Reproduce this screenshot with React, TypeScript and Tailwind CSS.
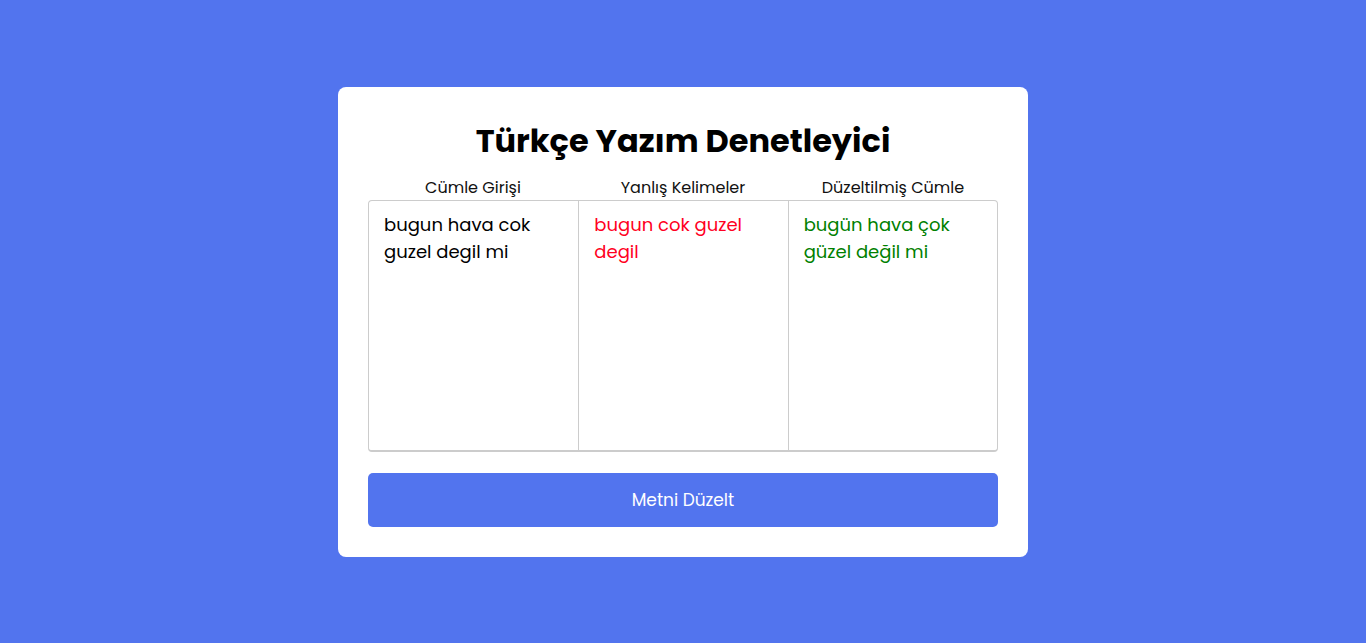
export default function App() {
  const font = { fontFamily: '"Poppins", "Lato", "Noto Sans", sans-serif' };
  return (
    <div
      className="min-h-screen w-full bg-[#5274ee] flex items-center justify-center"
      style={font}
    >
      <div className="w-[690px] bg-white rounded-lg p-[30px] flex flex-col">
        <h1 className="text-[32px] leading-[48px] font-bold text-black text-center">
          Türkçe Yazım Denetleyici
        </h1>
        <div className="grid grid-cols-3 mt-[12px] text-[16px] leading-[22px] text-[#111]">
          <div className="text-center">Cümle Girişi</div>
          <div className="text-center">Yanlış Kelimeler</div>
          <div className="text-center">Düzeltilmiş Cümle</div>
        </div>
        <div className="mt-[1px] h-[252px] grid grid-cols-3 border border-[#cccccc] border-b-2 rounded-[4px] text-[18px] leading-[27px]">
          <div className="px-[15px] pt-[10px] text-black">bugun hava cok guzel degil mi</div>
          <div className="px-[15px] pt-[10px] text-[#ff0022] border-l border-[#cccccc]">
            bugun cok guzel degil
          </div>
          <div className="px-[15px] pt-[10px] text-[#008000] border-l border-[#cccccc]">
            bugün hava çok güzel değil mi
          </div>
        </div>
        <button className="mt-[21px] h-[54px] w-full rounded-[5px] bg-[#5274ee] text-white text-[17px] pt-[2px]">
          Metni Düzelt
        </button>
      </div>
    </div>
  );
}
